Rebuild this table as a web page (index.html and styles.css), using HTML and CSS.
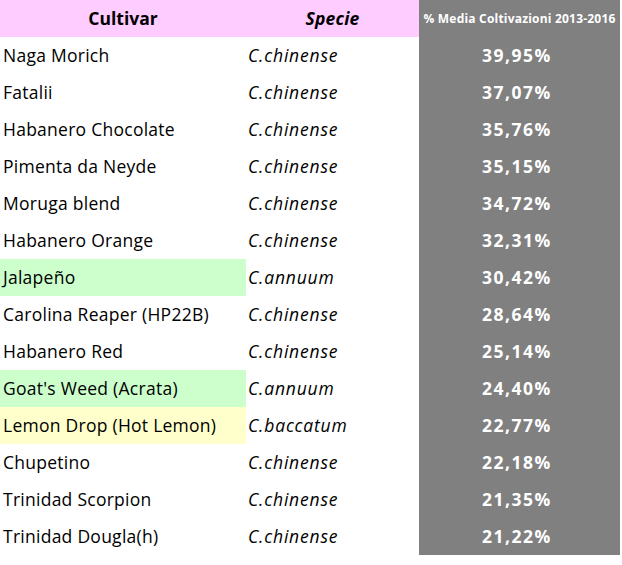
FILE: index.html
```html
<!DOCTYPE html>
<html lang="it">
<head>
<meta charset="utf-8">
<title>Cultivar</title>
<link rel="stylesheet" href="styles.css">
</head>
<body>
<div class="sheet">
  <div class="cell head h-cult">Cultivar</div>
  <div class="cell head h-spec">Specie</div>
  <div class="cell val h-val">% Media Coltivazioni 2013-2016</div>

  <div class="cell cult">Naga Morich</div><div class="cell spec">C.chinense</div><div class="cell val">39,95%</div>
  <div class="cell cult">Fatalii</div><div class="cell spec">C.chinense</div><div class="cell val">37,07%</div>
  <div class="cell cult">Habanero Chocolate</div><div class="cell spec">C.chinense</div><div class="cell val">35,76%</div>
  <div class="cell cult">Pimenta da Neyde</div><div class="cell spec">C.chinense</div><div class="cell val">35,15%</div>
  <div class="cell cult">Moruga blend</div><div class="cell spec">C.chinense</div><div class="cell val">34,72%</div>
  <div class="cell cult">Habanero Orange</div><div class="cell spec">C.chinense</div><div class="cell val">32,31%</div>
  <div class="cell cult green">Jalapeño</div><div class="cell spec">C.annuum</div><div class="cell val">30,42%</div>
  <div class="cell cult">Carolina Reaper (HP22B)</div><div class="cell spec">C.chinense</div><div class="cell val">28,64%</div>
  <div class="cell cult">Habanero Red</div><div class="cell spec">C.chinense</div><div class="cell val">25,14%</div>
  <div class="cell cult green">Goat's Weed (Acrata)</div><div class="cell spec">C.annuum</div><div class="cell val">24,40%</div>
  <div class="cell cult yellow">Lemon Drop (Hot Lemon)</div><div class="cell spec">C.baccatum</div><div class="cell val">22,77%</div>
  <div class="cell cult">Chupetino</div><div class="cell spec">C.chinense</div><div class="cell val">22,18%</div>
  <div class="cell cult">Trinidad Scorpion</div><div class="cell spec">C.chinense</div><div class="cell val">21,35%</div>
  <div class="cell cult">Trinidad Dougla(h)</div><div class="cell spec">C.chinense</div><div class="cell val">21,22%</div>
</div>
</body>
</html>
```
FILE: styles.css
```css
html, body {
  margin: 0;
  padding: 0;
  background: #ffffff;
}
body {
  font-family: "Open Sans", Lato, "Liberation Sans", sans-serif;
  font-size: 17.5px;
  color: #000000;
}
.sheet {
  display: grid;
  grid-template-columns: 246px 173px 201px;
  grid-auto-rows: 37px;
  width: 620px;
}
.cell {
  display: flex;
  align-items: center;
  white-space: nowrap;
  overflow: hidden;
  padding-bottom: 1px;
}
.head {
  background: #ffccff;
  font-weight: bold;
  justify-content: center;
}
.h-spec {
  font-style: italic;
  letter-spacing: 0.2px;
}
.cult {
  padding-left: 3px;
  letter-spacing: 0.26px;
}
.spec {
  font-style: italic;
  padding-left: 2px;
  letter-spacing: 0.8px;
}
.val {
  background: #808080;
  color: #ffffff;
  font-weight: bold;
  justify-content: center;
  letter-spacing: 1.5px;
  padding-right: 5px;
}
.val.h-val {
  font-size: 12px;
  letter-spacing: 0.2px;
  padding-right: 0;
}
.green {
  background: #ccffcc;
}
.yellow {
  background: #ffffcc;
}
```
